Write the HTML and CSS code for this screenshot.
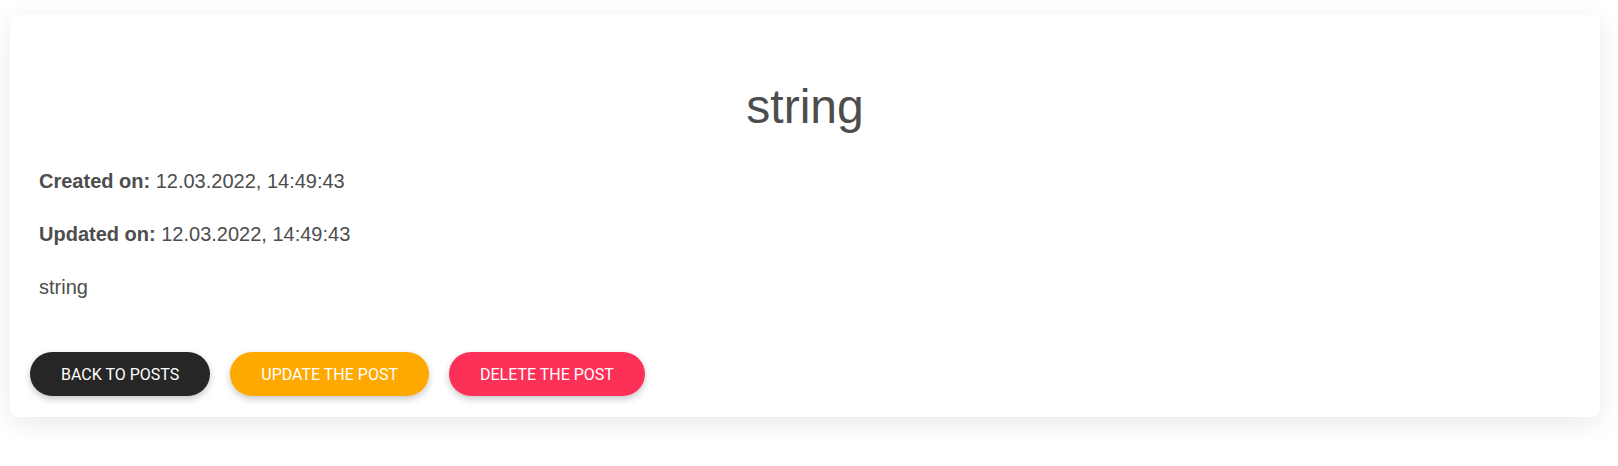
FILE: index.html
```html
<!DOCTYPE html>
<html lang="en">
<head>
<meta charset="utf-8">
<title>string</title>
<link rel="stylesheet" href="styles.css">
</head>
<body>
<div class="page">
  <article class="card">
    <h1 class="title">string</h1>
    <div class="meta">
      <p class="line"><strong>Created on:</strong> 12.03.2022, 14:49:43</p>
      <p class="line"><strong>Updated on:</strong> 12.03.2022, 14:49:43</p>
      <p class="line">string</p>
    </div>
    <div class="actions">
      <button class="btn btn-dark">BACK TO POSTS</button>
      <button class="btn btn-orange">UPDATE THE POST</button>
      <button class="btn btn-red">DELETE THE POST</button>
    </div>
  </article>
</div>
</body>
</html>
```
FILE: styles.css
```css
html, body {
  margin: 0;
  padding: 0;
  background: #ffffff;
}

body {
  font-family: "Liberation Sans", Arial, sans-serif;
  color: #4d4d4d;
}

.page {
  padding: 15px 18px 50px 10px;
}

.card {
  background: #ffffff;
  border-radius: 8px;
  box-shadow: 0 6px 26px rgba(0, 0, 0, 0.09);
  padding: 0 20px 21px;
}

.title {
  margin: 0;
  padding-top: 65px;
  font-size: 48px;
  line-height: 54px;
  font-weight: 400;
  text-align: center;
  color: #4d4d4d;
}

.meta {
  margin-top: 36px;
  padding: 0 9px;
  display: flex;
  flex-direction: column;
  gap: 30px;
}

.line {
  margin: 0;
  font-size: 20px;
  line-height: 23px;
}

.line strong {
  font-weight: 700;
}

.actions {
  margin-top: 53px;
  display: flex;
  gap: 20px;
}

.btn {
  height: 44px;
  padding: 0 31px;
  border: none;
  border-radius: 22px;
  font-family: Roboto, "Liberation Sans", Arial, sans-serif;
  font-size: 16px;
  color: #ffffff;
  cursor: pointer;
  box-shadow: 0 3px 7px rgba(0, 0, 0, 0.22);
}

.btn-dark {
  background: #262626;
}

.btn-orange {
  background: #ffa800;
}

.btn-red {
  background: #fd3158;
}
```
